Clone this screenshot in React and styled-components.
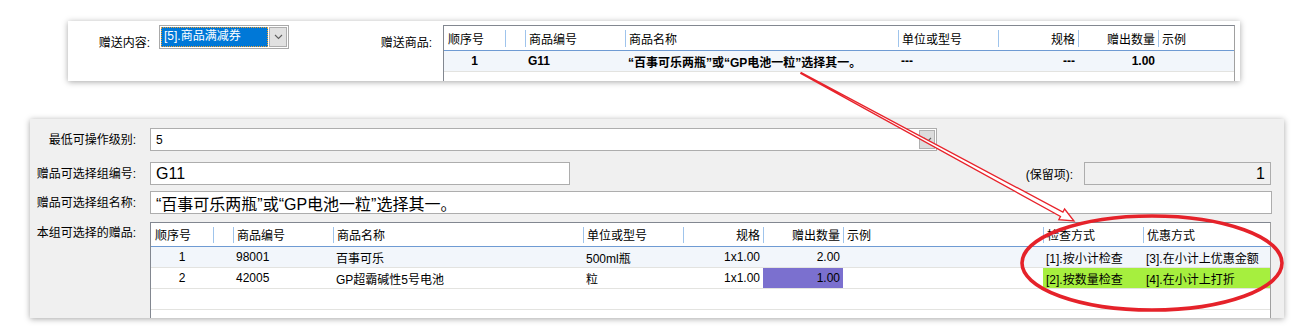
import React from 'react';
import styled, { createGlobalStyle } from 'styled-components';

const GlobalStyle = createGlobalStyle`
  body {
    margin: 0;
    background: #fff;
    font-family: 'Liberation Sans', 'Noto Sans CJK SC', sans-serif;
    font-size: 12px;
    color: #000;
  }
  * {
    box-sizing: border-box;
  }
`;

const topCols = [
  { key: 'seq', title: '顺序号', width: 61, align: 'center' },
  { key: 'blank', title: '', width: 20 },
  { key: 'code', title: '商品编号', width: 100 },
  { key: 'name', title: '商品名称', width: 273 },
  { key: 'unit', title: '单位或型号', width: 100 },
  { key: 'spec', title: '规格', width: 80, align: 'right' },
  { key: 'qty', title: '赠出数量', width: 80, align: 'right' },
  { key: 'demo', title: '示例', width: 76 },
];

const topRows = [
  {
    seq: '1',
    code: 'G11',
    name: '“百事可乐两瓶”或“GP电池一粒”选择其一。',
    unit: '---',
    spec: '---',
    qty: '1.00',
  },
];

const bottomCols = [
  { key: 'seq', title: '顺序号', width: 62, align: 'center' },
  { key: 'blank', title: '', width: 20 },
  { key: 'code', title: '商品编号', width: 100 },
  { key: 'name', title: '商品名称', width: 250 },
  { key: 'unit', title: '单位或型号', width: 100 },
  { key: 'spec', title: '规格', width: 80, align: 'right' },
  { key: 'qty', title: '赠出数量', width: 80, align: 'right' },
  { key: 'demo', title: '示例', width: 200 },
  { key: 'check', title: '检查方式', width: 100 },
  { key: 'promo', title: '优惠方式', width: 127 },
];

const bottomRows = [
  {
    seq: '1',
    code: '98001',
    name: '百事可乐',
    unit: '500ml瓶',
    spec: '1x1.00',
    qty: '2.00',
    check: '[1].按小计检查',
    promo: '[3].在小计上优惠金额',
  },
  {
    seq: '2',
    code: '42005',
    name: 'GP超霸碱性5号电池',
    unit: '粒',
    spec: '1x1.00',
    qty: '1.00',
    check: '[2].按数量检查',
    promo: '[4].在小计上打折',
    marks: { qty: '#7b70cf', check: '#a6ef3e', promo: '#a6ef3e' },
  },
  {},
  {},
];

const template = cols => cols.map(c => `${c.width}px`).join(' ');

const DataGrid = ({ cols, rows, headHeight, rowHeight, bold, width, height }) => (
  <Grid $width={width} $height={height}>
    <HeadRow $cols={template(cols)} $h={headHeight}>
      {cols.map((c, i) => (
        <HeadCell key={c.key} $align={c.align === 'right' ? 'right' : 'left'} $sep={i > 0}>
          {c.title}
        </HeadCell>
      ))}
    </HeadRow>
    {rows.map((r, ri) => (
      <BodyRow key={ri} $cols={template(cols)} $h={rowHeight} $alt={ri === 0}>
        {cols.map(c => (
          <BodyCell
            key={c.key}
            $align={c.align}
            $bold={bold}
            $bg={r.marks && r.marks[c.key]}
          >
            {r[c.key]}
          </BodyCell>
        ))}
      </BodyRow>
    ))}
  </Grid>
);

const Chevron = () => (
  <svg width="9" height="6" viewBox="0 0 9 6">
    <path d="M1 1 L4.5 4.5 L8 1" fill="none" stroke="#606060" strokeWidth="1.1" />
  </svg>
);

// 标注：红色箭头和椭圆圈
const Annotation = () => (
  <Overlay width="1299" height="334" viewBox="0 0 1299 334">
    <polygon
      points="801.2,72.6 1062.9,212.1 1064.6,209 1074,221 1058.8,219.6 1060.5,216.5 800.8,73.4"
      fill="#fff"
      stroke="#e8232b"
      strokeWidth="1.3"
      strokeLinejoin="miter"
    />
    <ellipse cx="1152" cy="263" rx="130" ry="47" fill="none" stroke="#e5222a" strokeWidth="3.6" />
  </Overlay>
);

const App = () => (
  <>
    <GlobalStyle />
    <Page>
      <TopPanel>
        <TopLabel $width={82}>赠送内容:</TopLabel>
        <Select>
          <SelectValue>[5].商品满减券</SelectValue>
          <DropButton>
            <Chevron />
          </DropButton>
        </Select>
        <TopLabel $width={143}>赠送商品:</TopLabel>
        <TopGridWrap>
          <DataGrid
            cols={topCols}
            rows={topRows}
            headHeight={25}
            rowHeight={21}
            bold
            width={792}
            height={80}
          />
        </TopGridWrap>
      </TopPanel>

      <BottomPanel>
        <FormRow>
          <FieldLabel>最低可操作级别:</FieldLabel>
          <Input $width={787} $size={12}>
            5
            <InnerDrop>
              <Chevron />
            </InnerDrop>
          </Input>
        </FormRow>
        <FormRow $gap={11}>
          <FieldLabel>赠品可选择组编号:</FieldLabel>
          <Input $width={420} $size={16}>G11</Input>
          <SideLabel>(保留项):</SideLabel>
          <Input $width={187} $size={16} $readonly>1</Input>
        </FormRow>
        <FormRow $gap={6}>
          <FieldLabel>赠品可选择组名称:</FieldLabel>
          <Input $width={1122} $size={16}>“百事可乐两瓶”或“GP电池一粒”选择其一。</Input>
        </FormRow>
        <FormRow $gap={8} $top>
          <FieldLabel $top>本组可选择的赠品:</FieldLabel>
          <DataGrid
            cols={bottomCols}
            rows={bottomRows}
            headHeight={24}
            rowHeight={21}
            width={1121}
            height={120}
          />
        </FormRow>
      </BottomPanel>
      <Annotation />
    </Page>
  </>
);

export default App;

const Page = styled.div`
  position: relative;
  width: 1299px;
  height: 334px;
  padding-top: 21px;
  overflow: hidden;
`;

const TopPanel = styled.div`
  display: flex;
  align-items: flex-start;
  width: 1172px;
  height: 60px;
  margin-left: 68px;
  background: #fff;
  box-shadow: 0 1px 6px rgba(0, 0, 0, 0.35);
  overflow: hidden;
`;

const TopLabel = styled.div`
  flex: none;
  width: ${p => p.$width}px;
  padding-top: 14px;
  line-height: 16px;
  text-align: right;
  white-space: nowrap;
`;

const Select = styled.div`
  flex: none;
  display: flex;
  width: 130px;
  height: 24px;
  margin: 4px 0 0 9px;
  padding: 1px;
  border: 1px solid #a9a9a9;
  background: #fff;
`;

const SelectValue = styled.div`
  flex: 1;
  padding-left: 3px;
  line-height: 18px;
  color: #fff;
  background: #0078d7;
  outline: 1px dotted #f0a030;
  outline-offset: -1px;
  white-space: nowrap;
`;

const DropButton = styled.div`
  flex: none;
  display: flex;
  align-items: center;
  justify-content: center;
  width: 18px;
  margin-left: 1px;
  border: 1px solid #adadad;
  background: #e1e1e1;
`;

const TopGridWrap = styled.div`
  flex: none;
  margin: 4px 0 0 11px;
`;

const Grid = styled.div`
  flex: none;
  width: ${p => p.$width}px;
  height: ${p => p.$height}px;
  border: 1px solid #828790;
  border-right-color: #a0a0a0;
  background: #fff;
  overflow: hidden;
`;

const HeadRow = styled.div`
  display: grid;
  grid-template-columns: ${p => p.$cols};
  height: ${p => p.$h}px;
  border-bottom: 1px solid #6f9bd3;
`;

const HeadCell = styled.div`
  position: relative;
  display: flex;
  align-items: center;
  justify-content: ${p => (p.$align === 'right' ? 'flex-end' : 'flex-start')};
  padding: 0 3px 0 4px;
  white-space: nowrap;

  &::before {
    content: '';
    display: ${p => (p.$sep ? 'block' : 'none')};
    position: absolute;
    left: 0;
    top: 4px;
    bottom: 3px;
    width: 1px;
    background: #9fc4ec;
  }
`;

const BodyRow = styled.div`
  display: grid;
  grid-template-columns: ${p => p.$cols};
  height: ${p => p.$h}px;
  border-bottom: 1px solid #e3e3e0;
  background: ${p => (p.$alt ? '#f2f6fb' : '#fff')};
`;

const BodyCell = styled.div`
  display: flex;
  align-items: center;
  justify-content: ${p =>
    p.$align === 'right' ? 'flex-end' : p.$align === 'center' ? 'center' : 'flex-start'};
  padding: 0 3px 0 3px;
  font-weight: ${p => (p.$bold ? 700 : 400)};
  background: ${p => p.$bg || 'transparent'};
  white-space: nowrap;
  overflow: hidden;
`;

const BottomPanel = styled.div`
  display: flex;
  flex-direction: column;
  width: 1254px;
  height: 199px;
  margin: 38px 0 0 30px;
  padding-top: 9px;
  background: #f0f0f0;
  box-shadow: 0 1px 6px rgba(0, 0, 0, 0.35);
  overflow: hidden;
`;

const FormRow = styled.div`
  display: flex;
  align-items: ${p => (p.$top ? 'flex-start' : 'center')};
  margin-top: ${p => p.$gap || 0}px;
`;

const FieldLabel = styled.div`
  flex: none;
  width: 106px;
  margin-right: 14px;
  padding-top: ${p => (p.$top ? 3 : 0)}px;
  line-height: 16px;
  text-align: right;
  white-space: nowrap;
`;

const SideLabel = styled.div`
  flex: none;
  width: 503px;
  margin-right: 11px;
  text-align: right;
  white-space: nowrap;
`;

const Input = styled.div`
  position: relative;
  flex: none;
  display: flex;
  align-items: center;
  justify-content: ${p => (p.$readonly ? 'flex-end' : 'flex-start')};
  width: ${p => p.$width}px;
  height: 23px;
  padding: 0 5px;
  border: 1px solid #adadad;
  background: ${p => (p.$readonly ? '#f0f0f0' : '#fff')};
  font-size: ${p => p.$size}px;
  white-space: nowrap;
`;

const InnerDrop = styled.div`
  position: absolute;
  top: 1px;
  right: 1px;
  bottom: 1px;
  display: flex;
  align-items: center;
  justify-content: center;
  width: 16px;
  border: 1px solid #b0b0b0;
  background: #dcdcdc;
`;

const Overlay = styled.svg`
  position: absolute;
  left: 0;
  top: 0;
  pointer-events: none;
`;
